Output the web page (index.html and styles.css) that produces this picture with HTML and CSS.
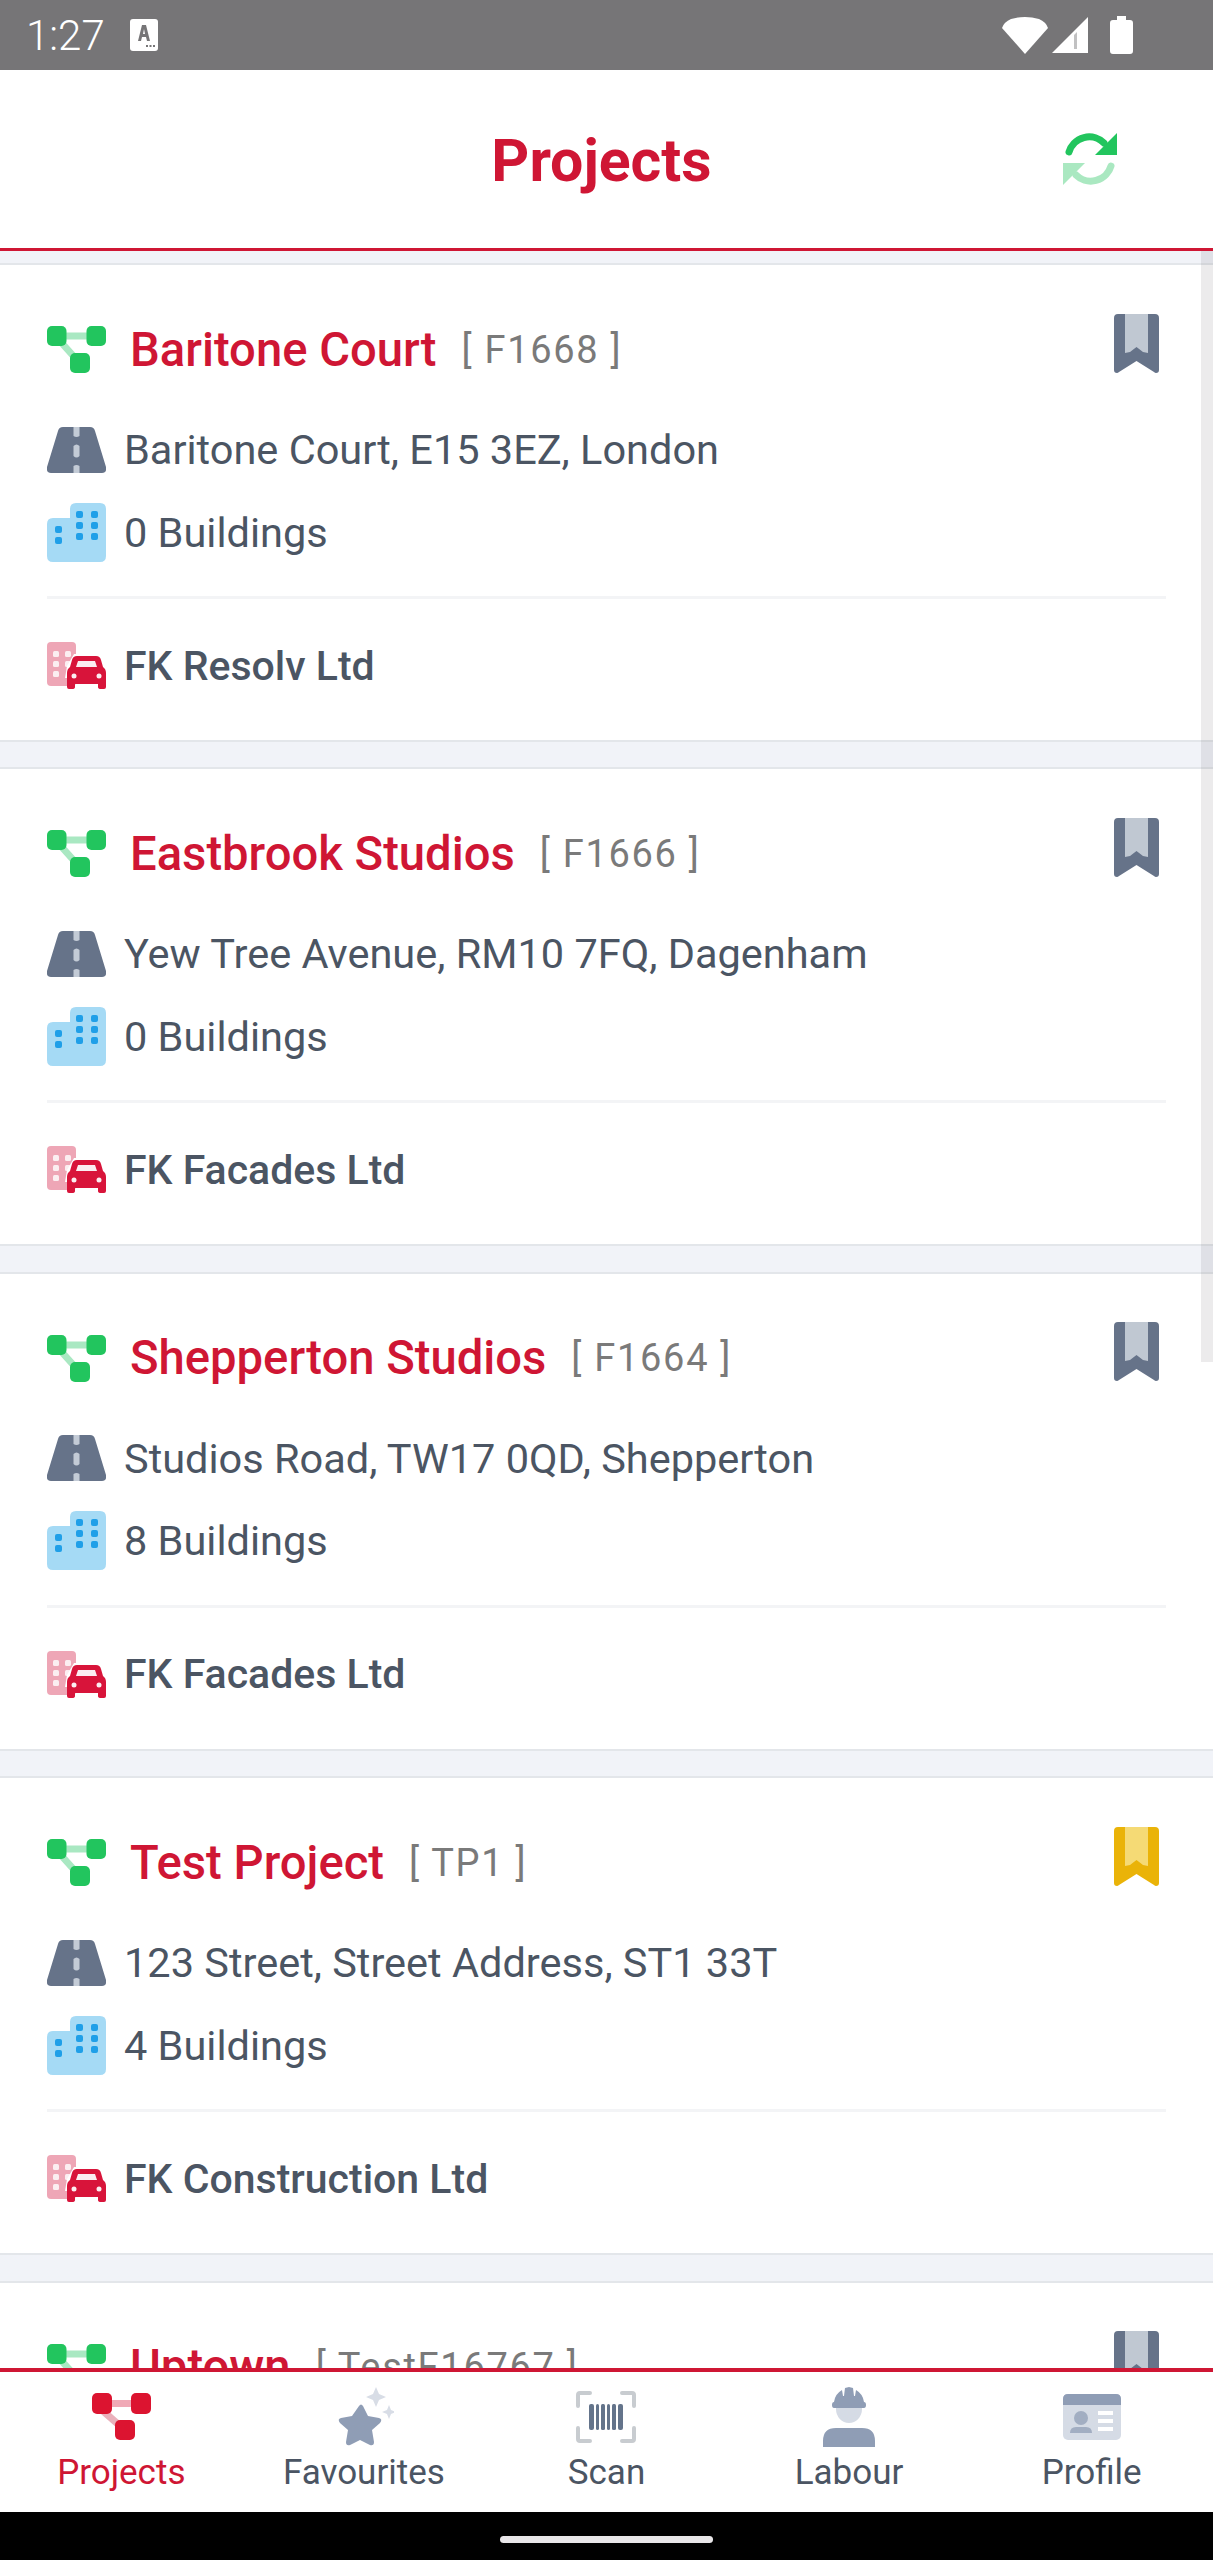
FILE: index.html
```html
<!DOCTYPE html>
<html lang="en">
<head>
  <meta charset="UTF-8" />
  <meta name="viewport" content="width=device-width, initial-scale=1" />
  <title>Projects</title>
  <link rel="stylesheet" href="styles.css">
</head>
<body>
  <svg class="sprite" xmlns="http://www.w3.org/2000/svg" aria-hidden="true">
    <symbol id="i-tree" viewBox="0 0 59 47">
      <path class="tree-link" d="M14 10h30M12 14l18 20" />
      <rect class="tree-node" x="0" y="0" width="19.5" height="20" rx="5" />
      <rect class="tree-node" x="39.5" y="0" width="19.5" height="20" rx="5" />
      <rect class="tree-node" x="23" y="27" width="20" height="20" rx="5" />
    </symbol>
    <symbol id="i-road" viewBox="0 0 59 46">
      <path fill="#667389" d="M16 0h27q4 0 5 4l11 36q1 6-4 6H4q-5 0-4-6L11 4q1-4 5-4z" />
      <path fill="#c3cbd6" d="M26.500 0h6v9q-3 2-6 0zM26.500 19q3-3 6 0v10q-3 3-6 0zM26.500 39q3-2 6 0v7h-6z" />
    </symbol>
    <symbol id="i-buildings" viewBox="0 0 59 59">
      <path fill="#a5daf5" d="M29 0h24q6 0 6 6v47q0 6-6 6H6q-6 0-6-6V21q0-6 6-6h17V6q0-6 6-6z" />
      <g fill="#1f9fe8">
        <rect x="29" y="8" width="7" height="7" rx="2" /><rect x="44" y="8" width="7" height="7" rx="2" />
        <rect x="29" y="19" width="7" height="7" rx="2" /><rect x="44" y="19" width="7" height="7" rx="2" />
        <rect x="29" y="30" width="7" height="7" rx="2" /><rect x="44" y="30" width="7" height="7" rx="2" />
        <rect x="8" y="23" width="7" height="7" rx="2" /><rect x="8" y="34" width="7" height="7" rx="2" />
      </g>
    </symbol>
    <symbol id="i-company" viewBox="0 0 59 47">
      <rect fill="#eea6b6" x="0" y="0" width="29" height="44" rx="4" />
      <g fill="#fbeef1">
        <rect x="6" y="9" width="6" height="6" rx="1.500" /><rect x="18" y="9" width="6" height="6" rx="1.500" />
        <rect x="6" y="19" width="6" height="6" rx="1.500" /><rect x="18" y="19" width="6" height="6" rx="1.500" />
        <rect x="6" y="29" width="6" height="6" rx="1.500" />
      </g>
      <path fill="#fff" d="M27 12h14v24H18l2-12z" />
      <path fill="#d8143a" d="M30 14h19q4 0 5 4l2 7q3 2 3 6v14q0 2-2 2h-3q-3 0-3-2v-3H28v3q0 2-3 2h-3q-2 0-2-2V31q0-4 3-6l2-7q1-4 5-4z" />
      <path fill="#fbeef1" d="M31 19h17l2 6H29z" />
      <circle fill="#fbeef1" cx="27" cy="34" r="2.500" /><circle fill="#fbeef1" cx="52" cy="34" r="2.500" />
    </symbol>
    <symbol id="i-bookmark" viewBox="0 0 45 59">
      <path class="bm-outer" d="M4 0h37q4 0 4 4v52q0 3-3 3-1 0-2-1L22.500 47 5 58q-1 1-2 1-3 0-3-3V4q0-4 4-4z" />
      <path class="bm-inner" d="M11 0h23v39l-5-1-6.500-5-6.500 5-5 1z" />
    </symbol>
  </svg>

  <div class="status-bar">
    <div class="status-left">
      <span class="clock">1:27</span>
      <svg class="status-a" viewBox="0 0 28 32" aria-hidden="true">
        <rect width="28" height="32" rx="3" fill="#fff" />
        <path fill="#767577" d="M12 6h4l4 16h-3l-1-4h-4l-1 4H8zM13 15h2l-1-5z" />
        <path stroke="#767577" stroke-width="2" stroke-dasharray="2 1.500" d="M16 27h9" />
      </svg>
    </div>
    <div class="status-right">
      <svg class="status-wifi" viewBox="0 0 46 37" aria-hidden="true"><path fill="#fff" d="M23 37L0 11Q2 5 9 2 23-2 37 2q7 3 9 9z" /></svg>
      <svg class="status-signal" viewBox="0 0 36 36" aria-hidden="true"><path fill="#fff" d="M36 0v36H0z" /><path fill="#767577" d="M25 15v17h-3V18z" opacity=".45" /></svg>
      <svg class="status-battery" viewBox="0 0 23 38" aria-hidden="true"><path fill="#fff" d="M7 0h9v4h4q3 0 3 3v28q0 3-3 3H3q-3 0-3-3V7q0-3 3-3h4z" /></svg>
    </div>
  </div>

  <header class="app-header">
    <h1>Projects</h1>
    <button class="refresh" type="button" aria-label="Refresh">
      <svg viewBox="0 0 56 52" aria-hidden="true">
        <g class="refresh-back">
          <path d="M49 33A21 21 0 0 1 14 42" />
          <path class="refresh-head" d="M1 52V30h22z" />
        </g>
        <path d="M7 19A21 21 0 0 1 42 10" />
        <path class="refresh-head" d="M55 0v22H33z" />
      </svg>
    </button>
  </header>

  <main class="project-list">
    <div class="scrollbar"></div>

    <article class="card">
      <div class="card-head">
        <svg class="icon"><use href="#i-tree" /></svg>
        <h2>Baritone Court</h2>
        <span class="code">[ F1668 ]</span>
        <svg class="bookmark"><use href="#i-bookmark" /></svg>
      </div>
      <div class="row row-address"><svg class="icon icon-road"><use href="#i-road" /></svg><span>Baritone Court, E15 3EZ, London</span></div>
      <div class="row row-buildings"><svg class="icon icon-buildings"><use href="#i-buildings" /></svg><span>0 Buildings</span></div>
      <div class="row row-company"><svg class="icon"><use href="#i-company" /></svg><span>FK Resolv Ltd</span></div>
    </article>

    <article class="card">
      <div class="card-head">
        <svg class="icon"><use href="#i-tree" /></svg>
        <h2>Eastbrook Studios</h2>
        <span class="code">[ F1666 ]</span>
        <svg class="bookmark"><use href="#i-bookmark" /></svg>
      </div>
      <div class="row row-address"><svg class="icon icon-road"><use href="#i-road" /></svg><span>Yew Tree Avenue, RM10 7FQ, Dagenham</span></div>
      <div class="row row-buildings"><svg class="icon icon-buildings"><use href="#i-buildings" /></svg><span>0 Buildings</span></div>
      <div class="row row-company"><svg class="icon"><use href="#i-company" /></svg><span>FK Facades Ltd</span></div>
    </article>

    <article class="card">
      <div class="card-head">
        <svg class="icon"><use href="#i-tree" /></svg>
        <h2>Shepperton Studios</h2>
        <span class="code">[ F1664 ]</span>
        <svg class="bookmark"><use href="#i-bookmark" /></svg>
      </div>
      <div class="row row-address"><svg class="icon icon-road"><use href="#i-road" /></svg><span>Studios Road, TW17 0QD, Shepperton</span></div>
      <div class="row row-buildings"><svg class="icon icon-buildings"><use href="#i-buildings" /></svg><span>8 Buildings</span></div>
      <div class="row row-company"><svg class="icon"><use href="#i-company" /></svg><span>FK Facades Ltd</span></div>
    </article>

    <article class="card">
      <div class="card-head">
        <svg class="icon"><use href="#i-tree" /></svg>
        <h2>Test Project</h2>
        <span class="code">[ TP1 ]</span>
        <svg class="bookmark is-favourite"><use href="#i-bookmark" /></svg>
      </div>
      <div class="row row-address"><svg class="icon icon-road"><use href="#i-road" /></svg><span>123 Street, Street Address, ST1 33T</span></div>
      <div class="row row-buildings"><svg class="icon icon-buildings"><use href="#i-buildings" /></svg><span>4 Buildings</span></div>
      <div class="row row-company"><svg class="icon"><use href="#i-company" /></svg><span>FK Construction Ltd</span></div>
    </article>

    <article class="card">
      <div class="card-head">
        <svg class="icon"><use href="#i-tree" /></svg>
        <h2>Uptown</h2>
        <span class="code">[ TestF16767 ]</span>
        <svg class="bookmark"><use href="#i-bookmark" /></svg>
      </div>
    </article>
  </main>

  <nav class="tab-bar">
    <a class="tab is-active">
      <svg viewBox="0 0 60 62" aria-hidden="true">
        <path fill="#f0a9b6" d="M15 13h30v7H15z" />
        <path stroke="#eab0bb" stroke-width="7" d="M12 24l16 14" />
        <g fill="#dc1430">
          <rect x="1" y="6" width="20" height="21" rx="5" /><rect x="40" y="6" width="20" height="21" rx="5" /><rect x="24" y="33" width="20" height="20" rx="5" />
        </g>
      </svg>
      <span>Projects</span>
    </a>
    <a class="tab">
      <svg viewBox="0 0 60 62" aria-hidden="true">
        <path fill="#8f9db5" d="M25 19q2-3 4 0l5 10 11 2q4 1 1 5l-8 7 2 12q0 4-4 3l-10-5-10 5q-4 1-4-3l2-12-8-7q-3-4 1-5l11-2z" />
        <path fill="#d8dde6" d="M42 0l3 7 7 3-7 3-3 7-3-7-7-3 7-3zM55 18l2 5 5 2-5 2-2 5-2-5-5-2 5-2z" />
      </svg>
      <span>Favourites</span>
    </a>
    <a class="tab">
      <svg viewBox="0 0 60 62" aria-hidden="true">
        <path fill="none" stroke="#c8ccd0" stroke-width="4" stroke-linecap="round" d="M14 6H4Q2 6 2 8v11M46 6h10q2 0 2 2v11M14 54H4q-2 0-2-2V41M46 54h10q2 0 2-2V41" />
        <g fill="#64748b">
          <rect x="13" y="17" width="5" height="26" rx="2" /><rect x="20" y="17" width="3" height="26" rx="1.500" /><rect x="25" y="17" width="4" height="26" rx="1.500" /><rect x="31" y="17" width="3" height="26" rx="1.500" /><rect x="36" y="17" width="4" height="26" rx="1.500" /><rect x="42" y="17" width="5" height="26" rx="2" />
        </g>
      </svg>
      <span>Scan</span>
    </a>
    <a class="tab">
      <svg viewBox="0 0 60 62" aria-hidden="true">
        <path fill="#d5dbe5" d="M17 20h26v2a13 14 0 0 1-26 0z" />
        <path fill="#8f9db5" d="M4 60v-6q0-13 13-13h26q13 0 13 13v6zM15 21q-2 0-2-3t2-3q1-8 8-12l1 6h1L26 1l4-1 4 1 1 8h1l1-6q7 4 8 12 2 0 2 3t-2 3z" />
      </svg>
      <span>Labour</span>
    </a>
    <a class="tab">
      <svg viewBox="0 0 60 62" aria-hidden="true">
        <rect fill="#d5dbe5" x="1" y="7" width="58" height="46" rx="5" />
        <path fill="#8f9db5" d="M6 7h48q5 0 5 5v6H1v-6q0-5 5-5z" />
        <circle fill="#a2aec2" cx="19" cy="31" r="7" />
        <path fill="#a2aec2" d="M8 46q0-6 6-6h10q6 0 6 6z" />
        <path fill="#fff" d="M36 24h15v4H36zM36 32h15v4H36zM36 40h15v4H36z" />
      </svg>
      <span>Profile</span>
    </a>
  </nav>

  <div class="system-nav"><div class="home-pill"></div></div>
</body>
</html>
```

FILE: styles.css
```css
:root {
  --red: #cf1634;
  --text: #4b5563;
  --page-bg: #f1f3f8;
  --rule: #e3e6ea;
}

* {
  box-sizing: border-box;
}

html, body {
  margin: 0;
  height: 100%;
}

body {
  height: 2560px;
  display: flex;
  flex-direction: column;
  overflow: hidden;
  background: #fff;
  font-family: Roboto, "Noto Sans", sans-serif;
  color: var(--text);
}

.sprite {
  display: none;
}

.tree-link {
  fill: none;
  stroke: #a9e8c2;
  stroke-width: 7;
}

.tree-node {
  fill: #22c55e;
}

.bm-outer {
  fill: var(--bm-outer);
}

.bm-inner {
  fill: var(--bm-inner);
}

/* status bar */
.status-bar {
  height: 70px;
  flex: none;
  background: #767577;
  display: flex;
  justify-content: space-between;
  align-items: center;
  padding: 0 80px 0 26px;
  color: #fff;
}

.status-left,
.status-right {
  display: flex;
  align-items: center;
}

.clock {
  font-size: 42px;
  font-weight: 300;
  margin-right: 25px;
}

.status-a {
  width: 28px;
  height: 32px;
}

.status-wifi {
  width: 46px;
  height: 37px;
}

.status-signal {
  width: 36px;
  height: 36px;
  margin-left: 4px;
}

.status-battery {
  width: 23px;
  height: 38px;
  margin-left: 22px;
}

/* header */
.app-header {
  height: 181px;
  flex: none;
  display: flex;
  align-items: center;
  justify-content: center;
  position: relative;
  background: #fff;
  border-bottom: 3px solid var(--red);
  padding-right: 10px;
  padding-top: 2px;
}

.app-header h1 {
  margin: 0;
  font-size: 59px;
  font-weight: 700;
  color: var(--red);
}

.refresh {
  position: absolute;
  left: 1062px;
  top: 63px;
  width: 56px;
  height: 52px;
  padding: 0;
  border: 0;
  background: none;
}

.refresh svg {
  display: block;
  width: 56px;
  height: 52px;
}

.refresh path {
  fill: none;
  stroke: #22c55e;
  stroke-width: 7;
  stroke-linecap: round;
}

.refresh .refresh-head {
  fill: #22c55e;
  stroke: none;
}

.refresh-back {
  opacity: 0.38;
}

/* list */
.project-list {
  flex: 1;
  min-height: 0;
  overflow: hidden;
  position: relative;
  background: var(--page-bg);
  padding-top: 12px;
}

.scrollbar {
  position: absolute;
  top: 0;
  right: 0;
  width: 12px;
  height: 1111px;
  background: rgba(110, 100, 110, 0.13);
  z-index: 2;
}

.card {
  height: 479px;
  margin-bottom: 25.400px;
  padding: 63px 47px 0;
  background: #fff;
  border-top: 2px solid var(--rule);
  border-bottom: 2px solid var(--rule);
}

.card-head {
  display: flex;
  align-items: center;
  height: 47px;
  margin-top: -2px;
}

.card-head h2 {
  margin: 0 0 0 24px;
  font-size: 47.200px;
  font-weight: 500;
  color: var(--red);
  white-space: nowrap;
}

.code {
  margin-left: 25px;
  font-size: 38px;
  letter-spacing: 1.700px;
  color: #7a7a7a;
  white-space: nowrap;
}

.bookmark {
  --bm-outer: #667389;
  --bm-inner: #c0c8d2;
  width: 45px;
  height: 59px;
  margin-left: auto;
  margin-right: 7px;
  margin-top: -13px;
  flex: none;
}

.bookmark.is-favourite {
  --bm-outer: #eab308;
  --bm-inner: #f5da75;
}

.icon {
  width: 59px;
  height: 47px;
  flex: none;
}

.icon-road {
  height: 46px;
}

.icon-buildings {
  height: 59px;
}

.row {
  display: flex;
  align-items: center;
  gap: 18px;
  font-size: 41.500px;
  white-space: nowrap;
}

.row-address {
  height: 59px;
  margin-top: 47px;
}

.row-buildings {
  margin-top: 25px;
  padding-bottom: 36px;
  height: 95px;
  border-bottom: 3px solid #f3f4f6;
}

.row-company {
  height: 47px;
  margin-top: 43px;
  font-size: 41px;
  font-weight: 500;
}

/* bottom tabs */
.tab-bar {
  height: 144px;
  flex: none;
  display: flex;
  background: #fff;
  border-top: 4px solid var(--red);
  position: relative;
  z-index: 3;
}

.tab {
  flex: 1;
  display: flex;
  flex-direction: column;
  align-items: center;
  padding-top: 15px;
  font-size: 35px;
  color: var(--text);
}

.tab svg {
  width: 60px;
  height: 62px;
  flex: none;
}

.tab span {
  margin-top: 3px;
}

.tab.is-active {
  color: var(--red);
}

.system-nav {
  height: 48px;
  flex: none;
  background: #000;
  display: flex;
  justify-content: center;
  padding-top: 24px;
}

.home-pill {
  width: 213px;
  height: 7px;
  border-radius: 4px;
  background: #e8e6e8;
}
```
